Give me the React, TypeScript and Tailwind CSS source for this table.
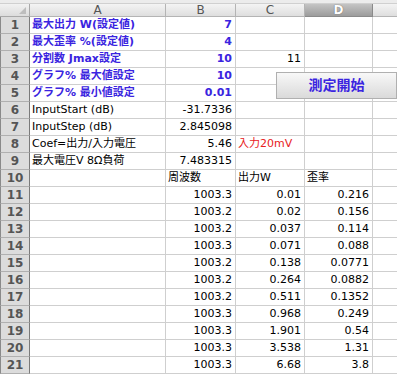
import React from 'react';

const BLUE = 'text-[#3a24e0]';
const font = { fontFamily: '"DejaVu Sans", "Noto Sans CJK JP", sans-serif' };

type Cell = { t?: string; cls?: string; left?: boolean };
type Row = [Cell, Cell, Cell, Cell];

const b = (t: string): Cell => ({ t, cls: `${BLUE} font-bold` });
const n = (t: string): Cell => ({ t });
const e: Cell = {};

const rows: Row[] = [
  [{ t: '最大出力 W(設定値)', cls: `${BLUE} font-bold`, left: true }, b('7'), e, e],
  [{ t: '最大歪率 %(設定値)', cls: `${BLUE} font-bold`, left: true }, b('4'), e, e],
  [{ t: '分割数 Jmax設定', cls: `${BLUE} font-bold`, left: true }, b('10'), n('11'), e],
  [{ t: 'グラフ% 最大値設定', cls: `${BLUE} font-bold`, left: true }, b('10'), e, e],
  [{ t: 'グラフ% 最小値設定', cls: `${BLUE} font-bold`, left: true }, b('0.01'), e, e],
  [{ t: 'InputStart (dB)', left: true }, n('-31.7336'), e, e],
  [{ t: 'InputStep (dB)', left: true }, n('2.845098'), e, e],
  [{ t: 'Coef=出力/入力電圧', left: true }, n('5.46'), { t: '入力20mV', cls: 'text-[#e8201c]', left: true }, e],
  [{ t: '最大電圧V 8Ω負荷', left: true }, n('7.483315'), e, e],
  [e, { t: '周波数', left: true }, { t: '出力W', left: true }, { t: '歪率', left: true }],
  [e, n('1003.3'), n('0.01'), n('0.216')],
  [e, n('1003.2'), n('0.02'), n('0.156')],
  [e, n('1003.2'), n('0.037'), n('0.114')],
  [e, n('1003.3'), n('0.071'), n('0.088')],
  [e, n('1003.2'), n('0.138'), n('0.0771')],
  [e, n('1003.2'), n('0.264'), n('0.0882')],
  [e, n('1003.2'), n('0.511'), n('0.1352')],
  [e, n('1003.3'), n('0.968'), n('0.249')],
  [e, n('1003.3'), n('1.901'), n('0.54')],
  [e, n('1003.3'), n('3.538'), n('1.31')],
  [e, n('1003.3'), n('6.68'), n('3.8')],
];

const cols = 'grid grid-cols-[30px_136px_70px_69px_68px_1fr]';

export default function App() {
  return (
    <div className="relative w-[397px] h-[377px] overflow-hidden bg-white text-[11px] text-black" style={font}>
      <div className="h-[4px] bg-[#ececec] border-b border-[#d0d0d0]" />
      <div className={`${cols} h-[13px] leading-[12px] text-[12px] text-[#555]`}>
        <div className="bg-gradient-to-b from-[#f2f2f2] to-[#dcdcdc] border-r border-b border-[#a8a8a8] relative">
          <div className="absolute right-[3px] bottom-[2px] w-0 h-0 border-l-[7px] border-l-transparent border-b-[7px] border-b-[#bdbdbd]" />
        </div>
        {['A', 'B', 'C'].map(c => (
          <div key={c} className="bg-gradient-to-b from-[#f4f4f4] to-[#dedede] border-r border-b border-[#b4b4b4] text-center">{c}</div>
        ))}
        <div className="bg-gradient-to-b from-[#c4c4c4] to-[#9c9c9c] border-r border-b border-[#8a8a8a] text-center text-white font-bold [text-shadow:0_0_1px_#444]">D</div>
        <div className="bg-gradient-to-b from-[#f4f4f4] to-[#dedede] border-b border-[#b4b4b4]" />
      </div>
      {rows.map((r, i) => (
        <div key={i} className={`${cols} h-[17px] leading-[16px]`}>
          <div className="bg-[#dcdcdc] border-l border-l-[#8a8a8a] border-r border-r-[#7a7a7a] border-b border-b-[#b0b0b0] text-center text-[12px] font-bold text-[#555]">
            {i + 1}
          </div>
          {r.map((c, j) => (
            <div
              key={j}
              className={`border-r border-b border-[#cfcfcf] whitespace-nowrap overflow-visible px-[2px] ${c.left ? 'text-left' : 'text-right pr-[3px]'} ${c.cls ?? ''}`}
            >
              {c.t}
            </div>
          ))}
          <div className="border-b border-[#cfcfcf]" />
        </div>
      ))}
      <button className="absolute left-[276px] top-[72px] w-[121px] h-[27px] border border-[#b0b0b0] bg-gradient-to-b from-[#f8f8f8] to-[#dadada] text-[14px] font-bold text-[#3a24e0]">
        測定開始
      </button>
    </div>
  );
}
